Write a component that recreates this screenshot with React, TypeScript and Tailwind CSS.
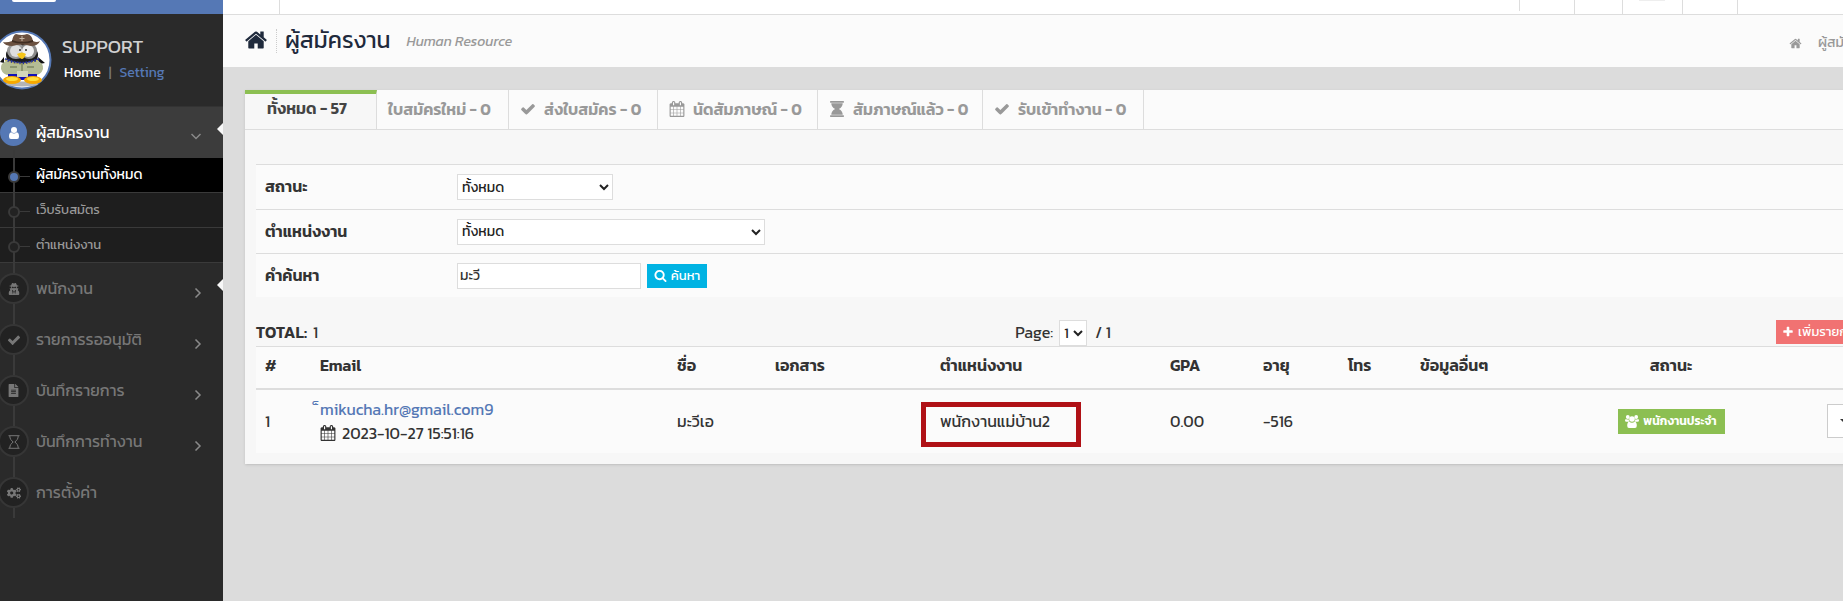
import type { ReactNode } from 'react'
import { FaCogs, FaFileAlt, FaUserSecret } from 'react-icons/fa'

// --- ICON PATHS (1792 grid) ---
const ICONS = {
  home: 'M1472 992v480q0 26-19 45t-45 19h-384v-384h-256v384h-384q-26 0-45-19t-19-45v-480q0-1 .5-3t.5-3l575-474 575 474q1 2 1 6zm223-69l-62 74q-8 9-21 11h-3q-13 0-21-7l-692-577-692 577q-12 8-24 7-13-2-21-11l-62-74q-8-10-7-23.5t11-21.5l719-599q32-26 76-26t76 26l244 204v-195q0-14 9-23t23-9h192q14 0 23 9t9 23v408l219 182q10 8 11 21.5t-7 23.5z',
  check: 'M1671 566q0 40-28 68l-724 724-136 136q-28 28-68 28t-68-28l-136-136-362-362q-28-28-28-68t28-68l136-136q28-28 68-28t68 28l294 295 656-657q28-28 68-28t68 28l136 136q28 28 28 68z',
  calendar: 'M192 1664h288v-288h-288v288zm352 0h320v-288h-320v288zm-352-352h288v-320h-288v320zm352 0h320v-320h-320v320zm-352-384h288v-288h-288v288zm736 736h320v-288h-320v288zm-384-736h320v-288h-320v288zm768 736h288v-288h-288v288zm-384-352h320v-320h-320v320zm-352-864v-288q0-13-9.500-22.500t-22.500-9.500h-64q-13 0-22.500 9.500t-9.500 22.500v288q0 13 9.500 22.500t22.500 9.500h64q13 0 22.500-9.500t9.500-22.500zm736 864h288v-320h-288v320zm-384-384h320v-288h-320v288zm384 0h288v-288h-288v288zm32-480v-288q0-13-9.500-22.500t-22.500-9.500h-64q-13 0-22.500 9.500t-9.500 22.500v288q0 13 9.500 22.500t22.500 9.500h64q13 0 22.500-9.500t9.500-22.500zm384-64v1280q0 52-38 90t-90 38h-1408q-52 0-90-38t-38-90v-1280q0-52 38-90t90-38h128v-96q0-66 47-113t113-47h64q66 0 113 47t47 113v96h384v-96q0-66 47-113t113-47h64q66 0 113 47t47 113v96h128q52 0 90 38t38 90z',
  hourglass: 'M128 0h1536v192h-1536zM128 1600h1536v192h-1536zM256 250h1280q0 430-430 646q430 216 430 646h-1280q0-430 430-646q-430-216-430-646z',
  search: 'M1216 832q0-185-131.500-316.500t-316.500-131.500-316.500 131.500-131.500 316.500 131.500 316.500 316.500 131.500 316.500-131.500 131.500-316.500zm512 832q0 52-38 90t-90 38q-54 0-90-38l-343-342q-179 124-399 124-143 0-273.500-55.500t-225-150-150-225-55.500-273.500 55.500-273.500 150-225 225-150 273.500-55.500 273.500 55.500 225 150 150 225 55.500 273.500q0 220-124 399l343 343q37 37 37 90z',
  plus: 'M1600 736v192q0 40-28 68t-68 28h-416v416q0 40-28 68t-68 28h-192q-40 0-68-28t-28-68v-416h-416q-40 0-68-28t-28-68v-192q0-40 28-68t68-28h416v-416q0-40 28-68t68-28h192q40 0 68 28t28 68v416h416q40 0 68 28t28 68z',
}

function Icon({ name, className }: { name: keyof typeof ICONS; className?: string }) {
  return (
    <svg viewBox="0 0 1792 1792" fill="currentColor" aria-hidden="true" className={`shrink-0 ${className ?? ''}`}>
      <path d={ICONS[name]} />
    </svg>
  )
}

function UserIcon() {
  return (
    <svg viewBox="0 0 10 12" fill="currentColor" className="h-3 w-2.5" aria-hidden="true">
      <circle cx="5" cy="3" r="3" />
      <path d="M2.200 5.200q2.800 2.400 5.600 0q2.200.4 2.200 4.300q0 2.500-2 2.500h-6q-2 0-2-2.500q0-3.900 2.200-4.300z" />
    </svg>
  )
}

function GroupIcon() {
  return (
    <svg viewBox="0 0 14 13" fill="currentColor" className="h-[13px] w-3.5" aria-hidden="true">
      <circle cx="2.800" cy="2" r="1.900" />
      <circle cx="11.200" cy="2" r="1.900" />
      <circle cx="7" cy="4" r="2.800" />
      <path d="M1 4q1.500 1 2.600.2q.2 1.700 1 2.500h-3.200q-1.400 0-1.400-1.200q0-1.400 1-1.500zM13 4q-1.500 1-2.600.2q-.2 1.700-1 2.500h3.200q1.400 0 1.400-1.200q0-1.400-1-1.500z" />
      <path d="M4.200 6.800q2.800 2 5.600 0q2 .3 2 4q0 2.200-1.800 2.200h-6q-1.800 0-1.800-2.200q0-3.700 2-4z" />
    </svg>
  )
}

function HourglassOutline() {
  return (
    <svg viewBox="0 0 12 14" fill="none" stroke="currentColor" className="w-3 h-3.5" aria-hidden="true">
      <path d="M0.500 0.700h11M0.500 13.300h11M1.800 1c0 3 1.500 4.500 3.400 6c-1.900 1.500-3.400 3-3.400 6M10.200 1c0 3-1.500 4.500-3.400 6c1.900 1.500 3.400 3 3.400 6" />
    </svg>
  )
}

function Avatar() {
  return (
    <svg viewBox="0 0 60 60" className="w-[60px] h-[60px] -ml-2 shrink-0" role="img" aria-label="SUPPORT">
      <circle cx="30" cy="30" r="28.500" fill="#fff" stroke="#5578b5" strokeWidth="2" />
      <ellipse cx="30" cy="54" rx="16" ry="2.500" fill="#b5b5b5" />
      <path d="M12 33l-4-1 4-5zM47 34l6-1-7-6z" fill="#111" />
      <ellipse cx="30" cy="25" rx="16" ry="12" fill="#1c1c1c" />
      <ellipse cx="24" cy="21" rx="9" ry="8" fill="#9a9a9a" />
      <ellipse cx="37" cy="21" rx="8" ry="8" fill="#8a8a8a" />
      <ellipse cx="24" cy="21" rx="6" ry="6" fill="#dedede" />
      <ellipse cx="36" cy="21" rx="6" ry="6" fill="#f0f0f0" />
      <circle cx="28" cy="20" r="1" fill="#333" />
      <circle cx="34" cy="20" r="1" fill="#333" />
      <path d="M16 30q14 6 28 0q8 3 7 9q-2 6-8 6h-26q-6 0-8-6q-1-6 7-9z" fill="#b4bc95" />
      <path d="M16 44h29v4q-15 4-29 0z" fill="#1212b8" />
      <path d="M25 41h11v6h-11z" fill="#d3d7ba" />
      <path d="M13 29q16 8 34 0" fill="none" stroke="#26329a" strokeWidth="2.500" strokeDasharray="2 1" />
      <path d="M13 30q16 8 34 0" fill="none" stroke="#e8d33b" strokeWidth="1" strokeDasharray="2 2" />
      <path d="M30 33v8M18 37h7M35 37h7" stroke="#7e8863" strokeWidth="1.500" />
      <path d="M25 24q5-3 9 0q-2 5-4 5t-5-5z" fill="#f5c518" />
      <ellipse cx="20" cy="50" rx="9" ry="4" fill="#f6a800" />
      <ellipse cx="41" cy="50" rx="9" ry="4" fill="#f6a800" />
      <ellipse cx="20" cy="49" rx="6" ry="2" fill="#ffdf3a" />
      <ellipse cx="41" cy="49" rx="6" ry="2" fill="#ffdf3a" />
      <path d="M11 12q4 1 9-1q1-6 4-7q6 2 11 0q5 1 6 7q4 2 7 0q-2 5-9 5q-9-3-19 0q-7 0-9-4z" fill="#6b5140" />
      <path d="M20 10q10 4 21 0v2q-11 3-21 0z" fill="#3f2d22" />
      <path d="M30 6v5M27.500 8.500h5" stroke="#c8b9a8" strokeWidth="1" />
    </svg>
  )
}

function Chevron({ open }: { open?: boolean }) {
  return (
    <svg viewBox="0 0 10 10" fill="none" stroke="#8a8a8a" strokeWidth="1.500" className="w-2.5 h-2.5 mt-2" aria-hidden="true">
      <path d={open ? 'M0.500 2l4.500 4.500l4.500-4.500' : 'M2.500 0.500l4.500 4.500l-4.500 4.500'} />
    </svg>
  )
}

// little pointer on the right edge of the sidebar
function Pointer() {
  return <span className="absolute right-0 top-4 border-y-[6px] border-r-[6px] border-y-transparent border-r-[#f7f7f7]" />
}

const SUB_MENU = [
  { label: 'ผู้สมัครงานทั้งหมด', active: true },
  { label: 'เว็บรับสมัตร', active: false },
  { label: 'ตำแหน่งงาน', active: false },
]

const MENU: { label: string; icon: ReactNode; arrow: boolean; pointer?: boolean }[] = [
  { label: 'พนักงาน', icon: <FaUserSecret size={12} />, arrow: true, pointer: true },
  { label: 'รายการรออนุมัติ', icon: <Icon name="check" className="w-3.5 h-3.5" />, arrow: true },
  { label: 'บันทึกรายการ', icon: <FaFileAlt size={13} />, arrow: true },
  { label: 'บันทึกการทำงาน', icon: <HourglassOutline />, arrow: true },
  { label: 'การตั้งค่า', icon: <FaCogs size={14} />, arrow: false },
]

function Sidebar() {
  return (
    <aside className="w-[223px] shrink-0 bg-[#2a2a2a] overflow-hidden">
      <div className="h-3.5 bg-[#5578b5] pl-3">
        <div className="h-0.5 w-11 rounded-b bg-white" />
      </div>

      <div className="flex h-[92px] items-center gap-2.5">
        <Avatar />
        <div>
          <div className="text-[19px] leading-[26px] text-[#d0d0d0]">SUPPORT</div>
          <div className="flex gap-2 pl-0.5 text-sm leading-[26px] text-[#777]">
            <a href="#" className="text-white">Home</a>
            <span>|</span>
            <a href="#" className="text-[#5578b5]">Setting</a>
          </div>
        </div>
      </div>

      <nav className="relative">
        <a href="#" className="relative flex h-[52px] items-center border-t border-[#333] bg-[#3c3c3c] pr-[22px] text-white">
          <span className="z-10 flex h-[27px] w-[27px] items-center justify-center rounded-full bg-[#5578b5]"><UserIcon /></span>
          <span className="ml-[9px] flex-1 pb-0.5">ผู้สมัครงาน</span>
          <Chevron open />
          <Pointer />
        </a>
        {/* vertical line behind the round icons */}
        <span className="absolute left-[13px] top-11 bottom-0 w-0.5 bg-[#3a3a3a]" />

        {SUB_MENU.map((item) => (
          <a
            key={item.label}
            href="#"
            className={`flex h-[35px] items-center border-b border-[#3a3a3a] ${item.active ? 'bg-black text-sm text-white' : 'bg-[#1e1e1e] text-[13px] text-[#999]'}`}
          >
            <span className={`z-10 ml-2 mt-1 h-3 w-3 rounded-full border-2 border-[#3a3a3a] ${item.active ? 'bg-[#5578b5]' : 'bg-[#222]'}`} />
            <span className="mt-0.5 h-px w-2.5 bg-[#3a3a3a]" />
            <span className="ml-1.5">{item.label}</span>
          </a>
        ))}

        {MENU.map((item) => (
          <a key={item.label} href="#" className="relative flex h-[51px] items-center pr-5 text-[#777]">
            <span className="z-10 -ml-0.5 flex h-[31px] w-[31px] items-center justify-center rounded-full border-2 border-[#363636] bg-[#222]">{item.icon}</span>
            <span className="ml-[7px] flex-1 pb-0.5">{item.label}</span>
            {item.arrow && <Chevron />}
            {item.pointer && <Pointer />}
          </a>
        ))}
      </nav>
    </aside>
  )
}

const TABS: { label: string; icon?: keyof typeof ICONS; width: string }[] = [
  { label: 'ทั้งหมด - 57', width: 'w-[132px]' },
  { label: 'ใบสมัครใหม่ - 0', width: 'w-[132px]' },
  { label: 'ส่งใบสมัคร - 0', icon: 'check', width: 'w-[149px]' },
  { label: 'นัดสัมภาษณ์ - 0', icon: 'calendar', width: 'w-[160px]' },
  { label: 'สัมภาษณ์แล้ว - 0', icon: 'hourglass', width: 'w-[165px]' },
  { label: 'รับเข้าทำงาน - 0', icon: 'check', width: 'w-[161px]' },
]

function Select({ id, value, className }: { id: string; value: string; className: string }) {
  return (
    <select id={id} defaultValue={value} className={`h-[26px] border border-[#ddd] bg-white text-sm text-[#222] ${className}`}>
      <option>{value}</option>
    </select>
  )
}

function FilterRow({ id, label, children }: { id: string; label: string; children: ReactNode }) {
  return (
    <div className="flex h-11 items-center border-t border-[#ddd] bg-[#fbfbfb] first:h-[45px]">
      <label htmlFor={id} className="w-[201px] shrink-0 pb-0.5 pl-[9px] font-semibold">{label}</label>
      {children}
    </div>
  )
}

const COLUMNS = [
  { label: '#', width: 'w-[55px]' },
  { label: 'Email', width: 'w-[357px]' },
  { label: 'ชื่อ', width: 'w-[98px]' },
  { label: 'เอกสาร', width: 'w-[165px]' },
  { label: 'ตำแหน่งงาน', width: 'w-[230px]' },
  { label: 'GPA', width: 'w-[93px]' },
  { label: 'อายุ', width: 'w-[85px]' },
  { label: 'โทร', width: 'w-[72px]' },
  { label: 'ข้อมูลอื่นๆ', width: 'w-[150px]' },
]

export default function App() {
  return (
    <div className="flex min-h-screen overflow-hidden bg-[#dcdcdc] font-['Kanit','Noto_Sans_Thai','Noto_Sans',sans-serif] text-base text-[#333]">
      <Sidebar />

      <main className="min-w-0 flex-1 overflow-hidden">
        <div className="w-[calc(100%+60px)]">
          {/* top bar */}
          <div className="flex h-[15px] justify-between border-b border-[#ddd] bg-white">
            <div className="w-[57px] border-r border-[#ddd]" />
            <div className="flex w-[384px]">
              <div className="h-[11px] w-[55px] border-l border-[#ddd]" />
              <div className="w-12 border-l border-[#ddd]" />
              <div className="w-[60px] border-l border-[#ddd] pl-4"><div className="h-px w-[26px] bg-[#eee]" /></div>
              <div className="w-[55px] border-l border-[#ddd]" />
              <div className="flex-1 border-l border-[#ddd]" />
            </div>
          </div>

          <header className="flex h-[52px] items-center justify-between bg-[#fbfbfb] pl-[21px] text-[#1f2a3c]">
            <div className="flex items-center">
              <Icon name="home" className="mb-0.5 h-6 w-6" />
              <span className="mx-2 h-6 border-l border-dotted border-[#ccc]" />
              <h1 className="pb-0.5 text-[23px]">ผู้สมัครงาน</h1>
              <span className="ml-4 pt-0.5 text-sm italic text-[#999]">Human Resource</span>
            </div>
            <div className="flex w-[114px] items-center gap-4 pt-1 text-sm text-[#999]">
              <Icon name="home" className="h-[13px] w-[13px]" />
              <a href="#">ผู้สมัครงาน</a>
            </div>
          </header>

          <section className="mx-[22px] mt-[23px] bg-[#f7f7f7] pb-[11px] shadow-sm">
            <div className="flex h-10 border-b border-[#ddd] bg-[#fbfbfb] font-semibold text-[#999]">
              {TABS.map((tab, i) => (
                <button
                  key={tab.label}
                  className={`flex items-center gap-2 whitespace-nowrap border-r border-[#ddd] ${tab.width} ${i === 0 ? 'border-t-4 border-t-[#8cbf52] bg-[#f7f7f7] pb-2 pl-[22px] text-[#444]' : 'pb-0.5 pl-[11px]'}`}
                >
                  {tab.icon && <Icon name={tab.icon} className="h-4 w-4" />}
                  {tab.label}
                </button>
              ))}
            </div>

            <div className="px-[11px] pt-[34px]">
              <form onSubmit={(e) => e.preventDefault()}>
                <FilterRow id="status" label="สถานะ">
                  <Select id="status" value="ทั้งหมด" className="w-[156px]" />
                </FilterRow>
                <FilterRow id="position" label="ตำแหน่งงาน">
                  <Select id="position" value="ทั้งหมด" className="w-[308px]" />
                </FilterRow>
                <FilterRow id="keyword" label="คำค้นหา">
                  <input id="keyword" defaultValue="มะวี" className="h-[26px] w-[184px] border border-[#ddd] bg-white px-0.5 text-sm" />
                  <button className="ml-1.5 flex h-6 w-[60px] items-center justify-center gap-1 bg-[#00b3e3] text-[13px] text-white">
                    <Icon name="search" className="h-[13px] w-[13px]" />
                    ค้นหา
                  </button>
                </FilterRow>
              </form>

              <div className="mt-[23px] grid h-[26px] grid-cols-3 items-start">
                <div className="flex gap-1.5"><strong className="font-semibold">TOTAL:</strong> 1</div>
                <div className="flex items-start justify-center gap-1.5">
                  <label htmlFor="page">Page:</label>
                  <Select id="page" value="1" className="w-7" />
                  <span className="pl-0.5">/ 1</span>
                </div>
                <button className="flex h-6 w-[94px] items-center gap-1 justify-self-end whitespace-nowrap bg-[#f17272] pl-1.5 text-[13px] text-white">
                  <Icon name="plus" className="h-3 w-3" />
                  เพิ่มรายการ
                </button>
              </div>

              <table className="w-full table-fixed border-t border-[#ddd] bg-[#fbfbfb] text-left">
                <thead>
                  <tr className="h-[42px] border-b-2 border-[#ddd]">
                    {COLUMNS.map((col) => (
                      <th key={col.label} className={`px-[9px] pb-1 font-semibold ${col.width}`}>{col.label}</th>
                    ))}
                    <th className="w-[220px] pb-1 text-center font-semibold">สถานะ</th>
                    <th />
                  </tr>
                </thead>
                <tbody>
                  <tr className="h-16">
                    <td className="px-[9px]">1</td>
                    <td className="px-[9px] leading-6">
                      <a href="#" className="block text-[#5578b5]">็mikucha.hr@gmail.com9</a>
                      <span className="flex items-center gap-1.5"><Icon name="calendar" className="h-4 w-4" />2023-10-27 15:51:16</span>
                    </td>
                    <td className="px-[9px]">มะวีเอ</td>
                    <td />
                    <td className="relative px-[9px]">
                      พนักงานแม่บ้าน2
                      <span className="absolute -left-2.5 top-3 h-[45px] w-40 border-[5px] border-[#b01116]" />
                    </td>
                    <td className="px-[9px]">0.00</td>
                    <td className="px-[9px]">-516</td>
                    <td />
                    <td />
                    <td>
                      <span className="mx-auto flex h-[25px] w-[107px] items-center justify-center gap-1 whitespace-nowrap bg-[#8cbf52] text-xs font-semibold text-white">
                        <GroupIcon />
                        พนักงานประจำ
                      </span>
                    </td>
                    <td className="pr-[9px]">
                      <button aria-label="เมนู" className="ml-auto flex h-[34px] w-[34px] items-center justify-center border border-[#ccc] bg-white">
                        <span className="border-x-4 border-t-4 border-x-transparent border-t-[#333]" />
                      </button>
                    </td>
                  </tr>
                </tbody>
              </table>
            </div>
          </section>
        </div>
      </main>
    </div>
  )
}
